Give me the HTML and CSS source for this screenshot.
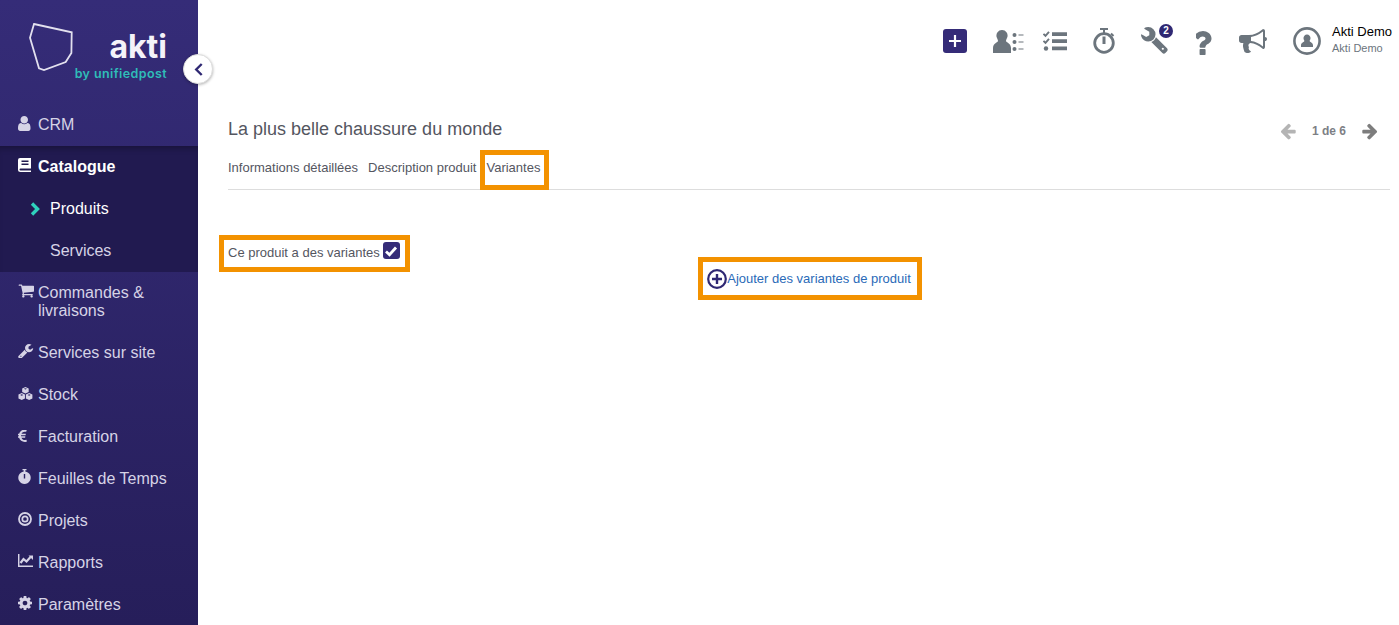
FILE: index.html
```html
<!DOCTYPE html>
<html lang="fr">
<head>
<meta charset="utf-8">
<title>Akti</title>
<link rel="stylesheet" href="styles.css">
</head>
<body>
<aside class="sidebar">
  <div class="logo">
    <svg class="logo-mark" viewBox="0 0 44 50" width="44" height="50"><path d="M5 2 42.700 10.300 42.400 31 36.700 40 15 48 10 46.300 1 15.700Z" fill="none" stroke="#e2e0ee" stroke-width="1.800"/></svg>
    <div class="logo-text"><span class="logo-name">akti</span><span class="logo-by">by unifiedpost</span></div>
  </div>
  <button class="collapse" type="button" aria-label="Réduire"><svg viewBox="0 0 12 16" width="11" height="15"><path d="M9.500 2 3.500 8l6 6" fill="none" stroke="#2f2873" stroke-width="2.600"/></svg></button>
  <ul class="nav">
    <li class="item"><svg class="ico ico-user" viewBox="256 128 1280 1536" preserveAspectRatio="xMinYMid meet"><path d="M1536 1399q0 109-62.500 187t-150.500 78h-854q-88 0-150.500-78t-62.500-187q0-85 8.500-160.500t31.500-152 58.500-131 94-89 134.500-34.500q131 128 313 128t313-128q76 0 134.500 34.500t94 89 58.500 131 31.500 152 8.500 160.500zm-256-887q0 159-112.500 271.500t-271.500 112.500-271.500-112.500-112.500-271.500 112.500-271.500 271.500-112.500 271.500 112.500 112.500 271.500z"/></svg><span>CRM</span></li>
    <li class="group">
      <div class="item item-open"><svg class="ico" viewBox="0 0 13 14" preserveAspectRatio="xMinYMid meet"><path d="M2 0h11v10.500H2.500a1 1 0 0 0 0 2H13V14H2.500A2.500 2.500 0 0 1 0 11.500V2a2 2 0 0 1 2-2Zm1.500 2.500V4h7V2.500Zm0 3V7h7V5.500Z" fill-rule="evenodd"/></svg><span>Catalogue</span></div>
      <div class="item sub sub-active"><svg class="chev" viewBox="0 0 10 14"><path d="M2 1.500 7.500 7 2 12.500" fill="none" stroke="#2fd1bd" stroke-width="3.400"/></svg><span>Produits</span></div>
      <div class="item sub"><span>Services</span></div>
    </li>
    <li class="item"><svg class="ico ico-cart" viewBox="0 128 1728 1536" preserveAspectRatio="xMinYMid meet"><path d="M704 1536q0 52-38 90t-90 38-90-38-38-90 38-90 90-38 90 38 38 90zm896 0q0 52-38 90t-90 38-90-38-38-90 38-90 90-38 90 38 38 90zm128-1088v512q0 24-16.500 42.500t-40.500 21.500l-1044 122q13 60 13 70 0 16-24 64h920q26 0 45 19t19 45-19 45-45 19h-1024q-26 0-45-19t-19-45q0-11 8-31.500t16-36 21.500-40 15.500-29.500l-177-823h-204q-26 0-45-19t-19-45 19-45 45-19h256q16 0 28.500 6.500t19.500 15.500 13 24.500 8 26 5.500 29.500 4.500 26h1201q26 0 45 19t19 45z"/></svg><span>Commandes &amp; livraisons</span></li>
    <li class="item"><svg class="ico" viewBox="64 128 1662 1536" preserveAspectRatio="xMinYMid meet"><path d="M448 1472q0-26-19-45t-45-19-45 19-19 45 19 45 45 19 45-19 19-45zm644-420l-682 682q-37 37-90 37-52 0-91-37l-106-108q-38-36-38-90 0-53 38-91l681-681q39 98 114.500 173.500t173.500 114.500zm634-435q0 39-23 106-47 134-164.500 217.500t-258.500 83.500q-185 0-316.500-131.500t-131.500-316.500 131.500-316.500 316.500-131.500q58 0 121.500 16.500t107.500 46.500q16 11 16 28t-16 28l-293 169v224l193 107q5-3 79-48.500t135.500-81 70.500-35.500q15 0 23.500 10t8.500 25z"/></svg><span>Services sur site</span></li>
    <li class="item"><svg class="ico ico-cubes" viewBox="0 0 16 14" preserveAspectRatio="xMinYMid meet"><path d="M8 0 11.500 1.500V5.500L8 7 4.500 5.500V1.500ZM6.300 2 8 2.800 9.700 2 8 1.300ZM4 6.500 7.500 8V12.500L4 14 .5 12.500V8ZM2.300 8.500 4 9.300 5.700 8.500 4 7.800ZM12 6.500 15.500 8V12.500L12 14 8.500 12.500V8ZM10.300 8.500 12 9.300 13.700 8.500 12 7.800Z" fill-rule="evenodd"/></svg><span>Stock</span></li>
    <li class="item"><svg class="ico ico-eur" viewBox="0 -10 1014 1372" preserveAspectRatio="xMinYMid meet"><path d="M976 1130l35 159q3 12-3 22.500t-17 14.500l-5 1q-4 2-10.500 3.500t-16 4.500-21.500 5.500-25.500 5-30 5-33.500 4.500-36.500 3-38.500 1q-234 0-409-130.500t-238-351.500h-95q-13 0-22.500-9.500t-9.500-22.500v-113q0-13 9.500-22.500t22.500-9.500h66q-2-57 1-105h-67q-14 0-23-9t-9-23v-114q0-14 9-23t23-9h98q67-210 243.500-338t400.500-128q102 0 194 23 11 3 20 15 6 11 3 24l-43 159q-3 13-14 19.500t-24 2.500l-4-1q-4-1-11.500-2.500l-17.500-3.500-22.500-3.500-26-3-29-2.500-29.500-1q-126 0-226 64t-150 176h468q16 0 25 12 10 12 7 26l-24 114q-5 26-32 26h-488q-3 47 0 105h459q15 0 25 12 9 12 6 27l-24 112q-2 11-11 18.500t-20 7.500h-387q48 117 149.500 185.500t228.500 68.500q18 0 36-1.500t33.500-3.500 29.500-4.500 24.500-5 18.500-4.500l12-3 5-2q13-5 26 2 12 7 15 21z"/></svg><span>Facturation</span></li>
    <li class="item"><svg class="ico ico-timer" viewBox="0 0 13 15" preserveAspectRatio="xMinYMid meet"><path d="M4.500 0h4v1.300H7.300v1.300A6.200 6.200 0 1 1 5.700 2.600V1.300H4.500ZM5.800 5v4.500h1.400V5Z" fill-rule="evenodd"/></svg><span>Feuilles de Temps</span></li>
    <li class="item"><svg class="ico" viewBox="0 0 14 14" preserveAspectRatio="xMinYMid meet"><circle cx="7" cy="7" r="6" fill="none" stroke="currentColor" stroke-width="1.800"/><circle cx="7" cy="7" r="2.700" fill="none" stroke="currentColor" stroke-width="1.700"/></svg><span>Projets</span></li>
    <li class="item"><svg class="ico ico-chart" viewBox="0 0 15 13" preserveAspectRatio="xMinYMid meet"><path d="M.7 0v12.200H15" fill="none" stroke="currentColor" stroke-width="1.500"/><path d="M2.500 9 5.500 5 8.500 7.500 12.500 3" fill="none" stroke="currentColor" stroke-width="2.200"/><path d="M10.500 1.500H15V6Z"/></svg><span>Rapports</span></li>
    <li class="item"><svg class="ico" viewBox="128 128 1536 1536" preserveAspectRatio="xMinYMid meet"><path d="M1152 896q0-106-75-181t-181-75-181 75-75 181 75 181 181 75 181-75 75-181zm512-109v222q0 12-8 23t-20 13l-185 28q-19 54-39 91 35 50 107 138 10 12 10 25t-9 23q-27 37-99 108t-94 71q-12 0-26-9l-138-108q-44 23-91 38-16 136-29 186-7 28-36 28h-222q-14 0-24.500-8.500t-11.500-21.500l-28-184q-49-16-90-37l-141 107q-10 9-25 9-14 0-25-11-126-114-165-168-7-10-7-23 0-12 8-23 15-21 51-66.500t54-70.500q-27-50-41-99l-183-27q-13-2-21-12.500t-8-23.500v-222q0-12 8-23t19-13l186-28q14-46 39-92-40-57-107-138-10-12-10-24 0-10 9-23 26-36 98.500-107.500t94.500-71.500q13 0 26 10l138 107q44-23 91-38 16-136 29-186 7-28 36-28h222q14 0 24.500 8.500t11.500 21.500l28 184q49 16 90 37l142-107q9-9 24-9 13 0 25 10 129 119 165 170 7 8 7 22 0 12-8 23-15 21-51 66.500t-54 70.500q26 50 41 98l183 28q13 2 21 12.500t8 23.500z"/></svg><span>Paramètres</span></li>
  </ul>
</aside>
<main class="main">
  <header class="topbar">
    <button class="add" type="button" aria-label="Ajouter"><svg viewBox="0 0 14 14" width="14" height="14"><path d="M7 1v12M1 7h12" stroke="#fff" stroke-width="2.200"/></svg></button>
    <svg class="tool tool-contacts" viewBox="0 0 31 23" width="31" height="23"><path d="M9 0a5.500 5.500 0 0 1 5.300 7.200c-.5 1.500-1.300 2.800-1.300 3.800 0 1.500 5 2.200 5 7V23H0v-5c0-4.800 5-5.500 5-7 0-1-.8-2.300-1.300-3.800A5.500 5.500 0 0 1 9 0Z"/><circle cx="21.500" cy="5" r="2"/><circle cx="21.500" cy="12" r="2"/><circle cx="21.500" cy="19" r="2"/><path d="M25.500 5h5M25.500 12h5M25.500 19h5" stroke="#6c757d" stroke-width="1.100"/></svg>
    <svg class="tool tool-tasks" viewBox="0 0 24 20" width="24" height="20"><path d="M.5 2.800 2.500 4.800 6 .8M.5 9.800 2.500 11.800 6 7.800" fill="none" stroke="#6c757d" stroke-width="1.900"/><circle cx="3" cy="17.500" r="2.200"/><path d="M9 1.200h15v3.800H9ZM9 8.200h15V12H9ZM9 15.500h15v3.800H9Z"/></svg>
    <svg class="tool tool-timer" viewBox="0 0 24 26" width="24" height="26"><path d="M8 1h8M12 1v4" fill="none" stroke="#6c757d" stroke-width="2"/><circle cx="12" cy="15" r="9.300" fill="none" stroke="#6c757d" stroke-width="2.800"/><path d="M12 8.500V16" stroke="#6c757d" stroke-width="3"/><path d="M19 5.500 21.500 8" stroke="#6c757d" stroke-width="2"/></svg>
    <div class="tool-badge">
      <svg class="tool" viewBox="64 128 1664 1664" width="27" height="27"><path d="M448 1472q0-26-19-45t-45-19-45 19-19 45 19 45 45 19 45-19 19-45zm644-420l-682 682q-37 37-90 37-52 0-91-37l-106-108q-38-36-38-90 0-53 38-91l681-681q39 98 114.500 173.500t173.500 114.500zm634-435q0 39-23 106-47 134-164.500 217.500t-258.500 83.500q-185 0-316.500-131.500t-131.500-316.500 131.500-316.500 316.500-131.500q58 0 121.500 16.500t107.500 46.500q16 11 16 28t-16 28l-293 169v224l193 107q5-3 79-48.500t135.500-81 70.500-35.500q15 0 23.500 10t8.500 25z" transform="matrix(-1 0 0 1 1792 0)"/></svg>
      <span class="badge">2</span>
    </div>
    <svg class="tool tool-help" viewBox="540 220 800 1440" width="16" height="27"><path d="M1024 1375v240q0 16-12 28t-28 12h-240q-16 0-28-12t-12-28v-240q0-16 12-28t28-12h240q16 0 28 12t12 28zm316-600q0 54-15.500 101t-35 76.500-55 59.500-57.500 43.500-61 35.500q-41 23-68.500 65t-27.500 67q0 17-12 32.500t-28 15.500h-240q-15 0-25.500-18.500t-10.500-37.500v-45q0-83 65-156.500t143-108.500q59-27 84-56t25-76q0-42-46.500-74t-107.500-32q-65 0-108 29-35 25-107 115-13 16-31 16-12 0-25-8l-164-125q-13-10-15.500-25t5.500-28q160-266 464-266 80 0 161 31t146 83 106 127.500 41 158.500z"/></svg>
    <svg class="tool tool-horn" viewBox="0 0 1792 1792" width="28" height="28"><path d="M1664 640q53 0 90.500 37.500t37.500 90.500-37.500 90.500-90.500 37.500v384q0 52-38 90t-90 38q-417-347-812-380-58 19-91 66t-31 100.500 40 92.500q-20 33-23 65.500t6 58 33.500 55 48 50 61.500 50.500q-29 58-111.500 83t-168.500 11.500-132-55.500q-7-23-29.500-87.500t-32-94.500-23-89-15-101 3.500-98.500 22-110.500h-122q-66 0-113-47t-47-113v-192q0-66 47-113t113-47h480q435 0 896-384 52 0 90 38t38 90v384zm-128 604v-954q-394 302-768 343v270q377 42 768 341z"/></svg>
    <div class="account">
      <svg class="avatar" viewBox="0 0 28 28" width="28" height="28"><circle cx="14" cy="14" r="12.600" fill="none" stroke="#6c757d" stroke-width="2.600"/><path d="M14 7.500a3.500 3.500 0 0 1 3.500 3.800c0 1-.6 2-.9 2.700 0 1 3.400 1.600 3.400 4.200V20H8v-1.800c0-2.600 3.400-3.200 3.400-4.200-.3-.7-.9-1.700-.9-2.700A3.500 3.500 0 0 1 14 7.500Z" fill="#6c757d"/></svg>
      <div class="who"><span class="who-name">Akti Demo</span><span class="who-org">Akti Demo</span></div>
    </div>
  </header>
  <section class="content">
    <div class="title-row">
      <h1 class="title">La plus belle chaussure du monde</h1>
      <div class="pager">
        <svg class="arrow arrow-off" viewBox="0 0 1792 1792"><path d="M1664 896v128q0 53-32.500 90.500t-84.500 37.500h-704l293 294q38 36 38 90t-38 90l-75 76q-37 37-90 37-52 0-91-37l-651-652q-37-37-37-90 0-52 37-91l651-650q38-38 91-38 52 0 90 38l75 74q38 38 38 91t-38 91l-293 293h704q52 0 84.500 37.500t32.500 90.500z"/></svg>
        <span class="count"><b>1</b> de 6</span>
        <svg class="arrow" viewBox="0 0 1792 1792"><path d="M1600 960q0 54-37 91l-651 651q-39 37-91 37-51 0-90-37l-75-75q-38-38-38-91t38-91l293-293h-704q-52 0-84.500-37.500t-32.500-90.500v-128q0-53 32.500-90.500t84.500-37.500h704l-293-294q-38-36-38-90t38-90l75-75q38-38 90-38 53 0 91 38l651 651q37 35 37 90z"/></svg>
      </div>
    </div>
    <nav class="tabs">
      <a class="tab">Informations détaillées</a>
      <a class="tab">Description produit</a>
      <a class="tab tab-active marked">Variantes</a>
    </nav>
    <label class="has-variants marked">Ce produit a des variantes <span class="checkbox"><svg viewBox="0 0 14 14" width="14" height="14"><path d="M2 7.500 5.500 10.700 12 3.500" fill="none" stroke="#fff" stroke-width="2.800"/></svg></span></label>
    <div class="add-row">
      <a class="add-variants marked"><svg viewBox="0 0 20 20" width="20" height="20"><circle cx="10" cy="10" r="8.800" fill="none" stroke="#2f2873" stroke-width="2.200"/><path d="M10 5v10M5 10h10" stroke="#2f2873" stroke-width="2.400"/></svg><span>Ajouter des variantes de produit</span></a>
    </div>
  </section>
</main>
</body>
</html>
```
FILE: styles.css
```css
* { box-sizing: border-box; }
html, body { height: 100%; }
body {
  margin: 0;
  display: flex;
  overflow: hidden;
  font-family: "Liberation Sans", Arial, sans-serif;
  background: #fff;
  color: #54565f;
}
.sidebar {
  position: relative;
  flex: 0 0 198px;
  height: 625px;
  background: linear-gradient(180deg, #352c78 0%, #261e5a 100%);
}
.logo {
  display: flex;
  height: 104px;
  padding: 22px 0 0 29px;
}
.logo-mark { flex: none; }
.logo-text {
  display: flex;
  flex-direction: column;
  align-items: flex-end;
  width: 94px;
  padding-top: 6px;
}
.logo-name {
  font-family: Inter, sans-serif;
  font-weight: 700;
  font-size: 32px;
  line-height: 38px;
  color: #f4f3f9;
}
.logo-by {
  font-family: Inter, sans-serif;
  font-weight: 600;
  font-size: 12.500px;
  line-height: 16px;
  letter-spacing: .4px;
  color: #2fbdb8;
  white-space: nowrap;
}
.collapse {
  position: absolute;
  top: 54px;
  left: 183px;
  display: flex;
  align-items: center;
  justify-content: center;
  width: 30px;
  height: 30px;
  padding: 0;
  border: 1px solid #ddd;
  border-radius: 50%;
  background: #fff;
  box-shadow: 0 1px 3px rgba(0,0,0,.3);
}
.nav { list-style: none; margin: 0; padding: 0; }
.item {
  display: flex;
  padding: 12px 16px 12px 18px;
  font-size: 16px;
  line-height: 18px;
  color: #d6d3e6;
}
.ico {
  flex: none;
  width: 16px;
  height: 14px;
  margin-right: 4px;
  fill: currentColor;
}
.ico-user { height: 15px; }
.ico-cart { height: 15px; margin-top: -1px; margin-bottom: 1px; }
.ico-cubes { height: 13px; margin-top: 1px; }
.ico-chart { height: 13px; }
.ico-eur { height: 12px; margin-top: 2px; }
.ico-timer { height: 15px; margin-top: -1px; }
.group {
  background: #211a50;
  box-shadow: inset 0 6px 6px -4px rgba(0,0,0,.3);
}
.item-open { color: #fff; font-weight: 700; }
.sub { padding-left: 50px; position: relative; }
.sub-active { color: #fff; }
.chev {
  position: absolute;
  left: 30px;
  top: 14px;
  width: 10px;
  height: 14px;
}
.main { flex: 1; min-width: 0; padding-right: 9px; }
.topbar {
  display: flex;
  align-items: center;
  justify-content: flex-end;
  height: 82px;
  color: #6c757d;
}
.add {
  display: flex;
  align-items: center;
  justify-content: center;
  width: 24px;
  height: 24px;
  padding: 0;
  margin-right: 26px;
  border: 0;
  border-radius: 3px;
  background: #352c78;
}
.tool { fill: #6c757d; flex: none; display: block; }
.tool-contacts { margin-right: 19px; }
.tool-tasks { margin-right: 25px; }
.tool-timer { margin-right: 25px; }
.tool-badge { position: relative; margin-right: 28px; margin-bottom: 1px; }
.badge {
  position: absolute;
  top: -3px;
  right: -5px;
  width: 14px;
  height: 14px;
  border-radius: 50%;
  background: #2f2873;
  color: #fff;
  font-size: 10px;
  font-weight: 700;
  line-height: 14px;
  text-align: center;
}
.tool-help { margin-right: 27px; }
.tool-horn { margin-right: 26px; }
.account { display: flex; align-items: center; gap: 11px; }
.who { display: flex; flex-direction: column; width: 58px; padding-bottom: 4px; white-space: nowrap; }
.who-name { font-size: 13px; line-height: 18px; color: #000; }
.who-org { font-size: 11px; line-height: 15px; color: #6c757d; }
.content { padding-left: 30px; }
.title-row {
  display: flex;
  justify-content: space-between;
  align-items: center;
  padding-top: 20px;
  height: 74px;
}
.title { margin: 0; font-size: 18px; font-weight: 400; line-height: 22px; color: #54565f; }
.pager { display: flex; align-items: center; gap: 15px; padding-right: 11px; margin-top: 3px; }
.arrow { width: 18px; height: 18px; fill: #7d7d7d; }
.arrow-off { fill: #b4b4b4; }
.count { font-size: 12px; color: #7d7f85; font-weight: 700; }
.tabs {
  display: flex;
  align-items: flex-start;
  gap: 10px;
  height: 35px;
  margin-top: -1px;
  border-bottom: 1px solid #ddd;
  font-size: 13px;
}
.tab { color: #54565f; white-space: nowrap; line-height: 26px; padding-bottom: 4px; }
.tab-active { padding: 0 4px 4px 1px; margin-left: -1px; }
.marked { outline: 5px solid #f39200; }
.has-variants {
  display: inline-flex;
  align-items: center;
  gap: 3px;
  height: 27px;
  margin-top: 50px;
  padding: 0 5px 2px 4px;
  margin-left: -4px;
  font-size: 13px;
}
.checkbox {
  display: flex;
  align-items: center;
  justify-content: center;
  width: 17px;
  height: 17px;
  margin-bottom: 4px;
  border-radius: 3px;
  background: #352c78;
}
.add-row { display: flex; justify-content: center; margin-top: -5px; padding-left: 2px; }
.add-variants {
  display: flex;
  align-items: center;
  height: 33px;
  padding: 0 6px 0 4px;
  font-size: 13px;
  color: #2a6ab8;
  white-space: nowrap;
}
```
